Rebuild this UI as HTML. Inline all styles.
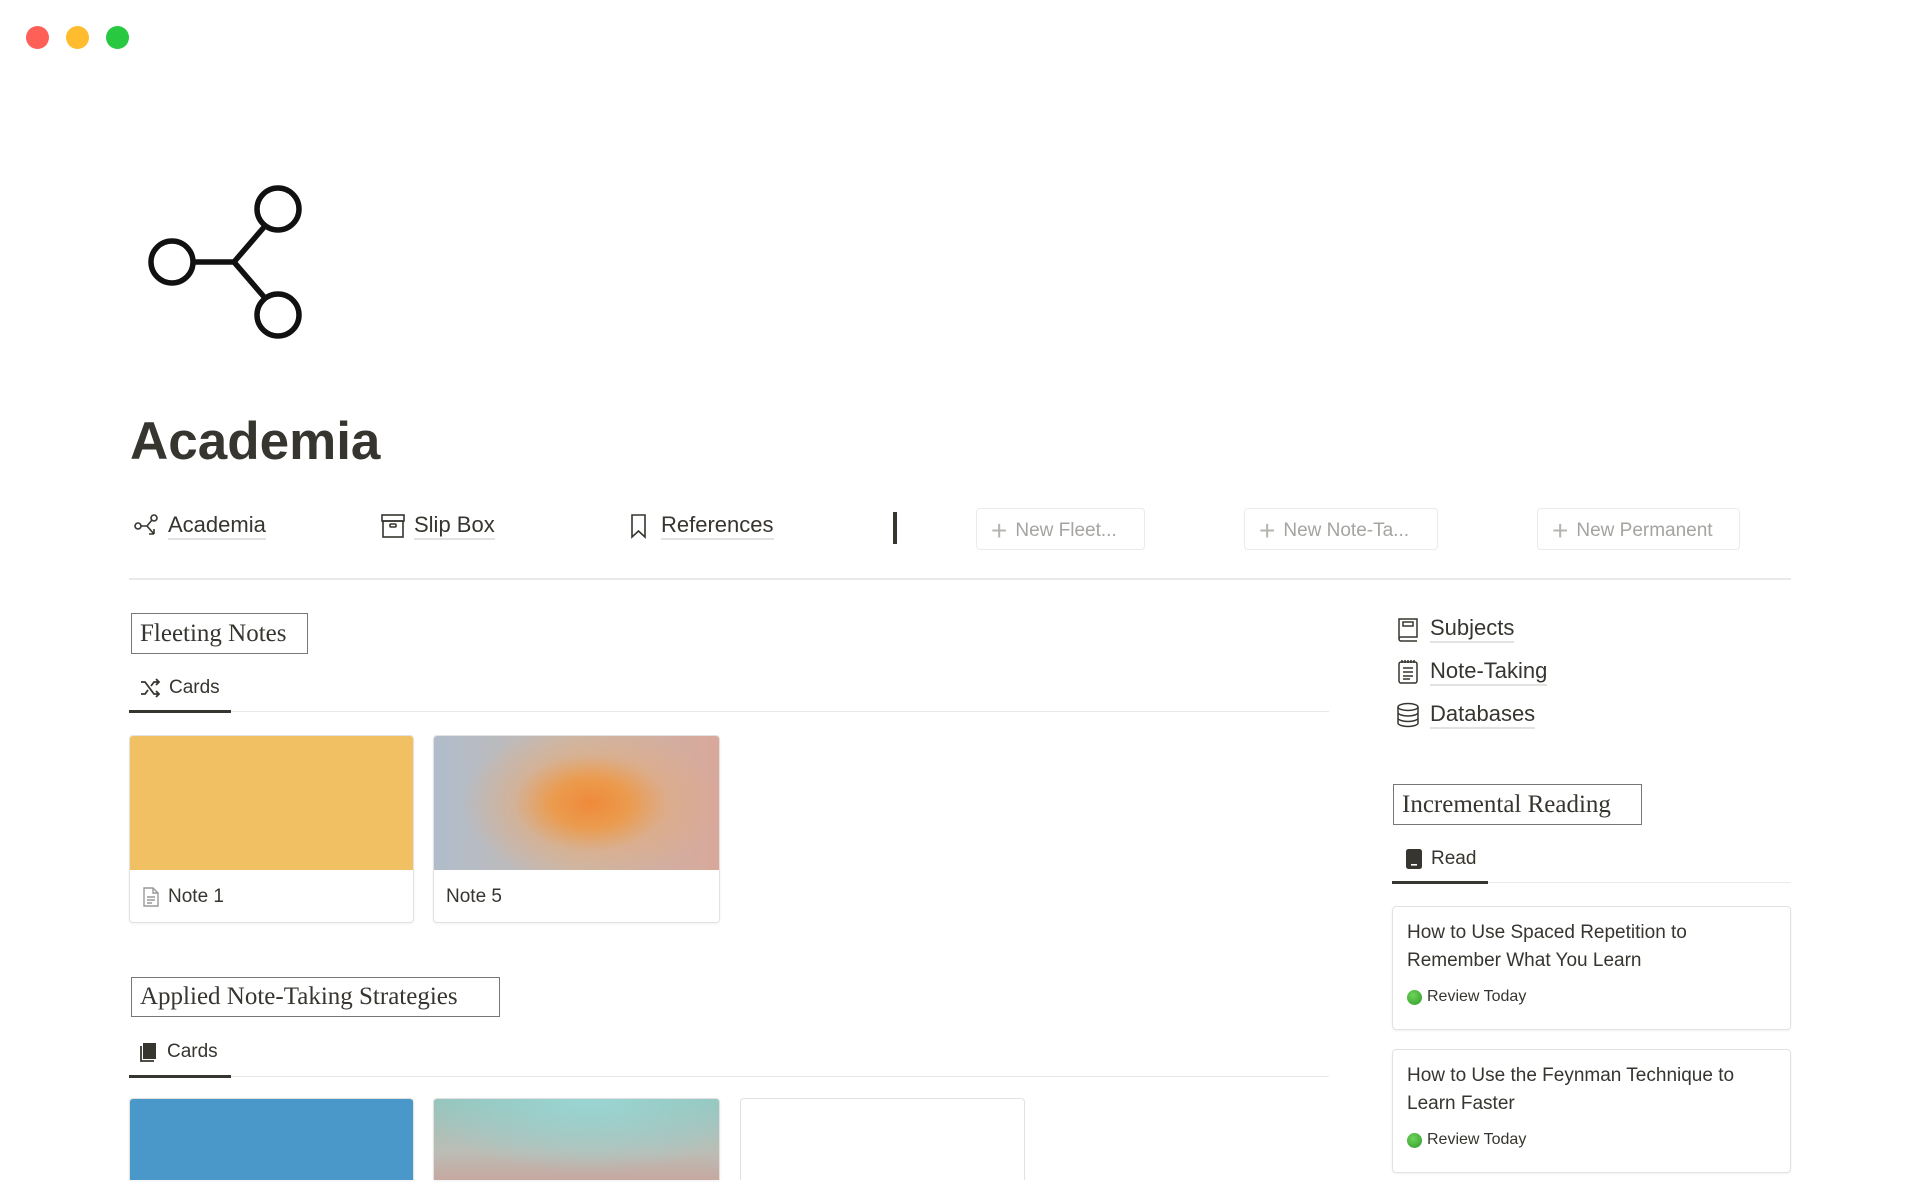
<!DOCTYPE html>
<html><head><meta charset="utf-8"><style>
*{box-sizing:border-box;margin:0;padding:0}
html,body{width:1920px;height:1200px;overflow:hidden}
body{background:#fff;position:relative;font-family:"Liberation Sans",sans-serif;color:#37352f}
.a{position:absolute}
.dot{position:absolute;width:23px;height:23px;border-radius:50%;top:26px}
.nav{position:absolute;top:512px;font-size:22px;display:flex;align-items:center;gap:8px}
.nav span{border-bottom:2px solid #e3e2e0;line-height:26px}
.btn{position:absolute;top:508px;height:42px;border:1px solid #ebebea;border-radius:4px;color:#a5a4a0;font-size:19px;display:flex;align-items:center;padding-left:14px;padding-top:3px;gap:8px}
.btn b{font-weight:300;font-size:28px;color:#b5b4b0}
.sbox{position:absolute;border:1.5px solid #777;font-family:"Liberation Serif",serif;font-size:25px;padding:0 8px;display:flex;align-items:center}
.tab{position:absolute;font-size:19px;display:flex;align-items:center;gap:8px;font-weight:500}
.card{position:absolute;border:1px solid #e3e2e0;border-radius:4px;overflow:hidden;box-shadow:0 1px 2px rgba(0,0,0,.06)}
.card .t{position:absolute;left:12px;bottom:14px;font-size:19px;display:flex;align-items:center;gap:8px}
.lnk{position:absolute;left:1396px;font-size:22px;display:flex;align-items:center;gap:10px}
.lnk span{border-bottom:2px solid #e3e2e0;line-height:26px}
.rc{position:absolute;left:1392px;width:399px;border:1px solid #e3e2e0;border-radius:4px;box-shadow:0 1px 2px rgba(0,0,0,.06);padding:12px 34px 14px 14px;font-size:19px;line-height:28px}
.rc .r{font-size:16px;display:flex;align-items:center;gap:5px;margin-top:8px}
.g{width:15px;height:15px;border-radius:50%;background:radial-gradient(circle at 40% 35%,#6fd35a,#2e9b2a)}
</style></head><body>
<div class="dot" style="left:26px;background:#fe5f57"></div>
<div class="dot" style="left:66px;background:#febc2e"></div>
<div class="dot" style="left:106px;background:#28c840"></div>

<svg class="a" style="left:140px;top:180px" width="170" height="170" viewBox="140 180 170 170" fill="none" stroke="#111" stroke-width="5.5">
<circle cx="172" cy="262" r="21"/><circle cx="278" cy="209" r="21"/><circle cx="278" cy="315" r="21"/>
<path d="M193 262H234M265 226L234 262L265 298"/></svg>

<div class="a" style="left:130px;top:411px;font-size:53px;font-weight:700;color:#37352f">Academia</div>

<div class="nav" style="left:134px"><svg width="26" height="24" viewBox="0 0 26 24" fill="none" stroke="#37352f" stroke-width="1.6"><circle cx="4" cy="12" r="3"/><circle cx="20" cy="4" r="3"/><path d="M7 12H13L18 6M13 12L20 20M20 20H15M20 20V15"/></svg><span>Academia</span></div>
<div class="nav" style="left:380px"><svg width="26" height="26" viewBox="0 0 26 26" fill="none" stroke="#37352f" stroke-width="1.6"><rect x="2" y="2" width="22" height="6"/><rect x="3" y="8" width="20" height="16"/><rect x="10" y="11" width="6" height="3" rx="1"/></svg><span>Slip Box</span></div>
<div class="nav" style="left:628px"><svg width="22" height="26" viewBox="0 0 22 26" fill="none" stroke="#37352f" stroke-width="1.6"><path d="M4 2H17V24L10.5 18L4 24Z"/></svg><span style="margin-left:3px">References</span></div>
<div class="a" style="left:893px;top:512px;width:4px;height:32px;background:#37352f"></div>

<div class="btn" style="left:976px;width:169px"><b>+</b>New Fleet...</div>
<div class="btn" style="left:1244px;width:194px"><b>+</b>New Note-Ta...</div>
<div class="btn" style="left:1537px;width:203px"><b>+</b>New Permanent</div>

<div class="a" style="left:129px;top:578px;width:1662px;height:2px;background:#e9e9e7"></div>

<div class="sbox" style="left:131px;top:613px;width:177px;height:41px">Fleeting Notes</div>
<div class="tab" style="left:139px;top:677px"><svg width="22" height="22" viewBox="0 0 22 22" fill="none" stroke="#37352f" stroke-width="1.8"><path d="M2 5H6L15 17H20M2 17H6L9 13M12 9L15 5H20M17 2L20 5L17 8M17 14L20 17L17 20"/></svg>Cards</div>
<div class="a" style="left:129px;top:711px;width:1200px;height:1px;background:#e9e9e7"></div>
<div class="a" style="left:129px;top:710px;width:102px;height:3px;background:#37352f"></div>

<div class="card" style="left:129px;top:735px;width:285px;height:188px"><div style="height:134px;background:#f0c062"></div><div class="t"><svg width="18" height="20" viewBox="0 0 18 20" fill="none" stroke="#999" stroke-width="1.4"><path d="M2 1H11L16 6V19H2Z M11 1V6H16 M5 10H13M5 13H13M5 16H10"/></svg>Note 1</div></div>
<div class="card" style="left:433px;top:735px;width:287px;height:188px"><div style="height:134px;background:radial-gradient(ellipse 45% 60% at 55% 50%,#ef8a3a 0%,#eb9b4e 30%,rgba(230,170,120,.5) 60%,rgba(180,190,210,0) 100%),linear-gradient(90deg,#b0bccb,#c8b9ae 50%,#d8a89a)"></div><div class="t">Note 5</div></div>

<div class="sbox" style="left:131px;top:977px;width:369px;height:40px">Applied Note-Taking Strategies</div>
<div class="tab" style="left:139px;top:1041px"><svg width="20" height="22" viewBox="0 0 20 22"><path d="M4 2H17V18H4Z" fill="#37352f"/><path d="M2 5V20H15" fill="none" stroke="#37352f" stroke-width="1.8"/></svg>Cards</div>
<div class="a" style="left:129px;top:1076px;width:1200px;height:1px;background:#e9e9e7"></div>
<div class="a" style="left:129px;top:1075px;width:102px;height:3px;background:#37352f"></div>

<div class="card" style="left:129px;top:1098px;width:285px;height:82px;border-bottom:none;border-radius:4px 4px 0 0;background:#4a97c9"></div>
<div class="card" style="left:433px;top:1098px;width:287px;height:82px;border-bottom:none;border-radius:4px 4px 0 0;background:radial-gradient(ellipse 60% 90% at 55% 0%,#9ad5d3,rgba(154,213,211,0) 100%),linear-gradient(180deg,#94c4bc,#bbbdb6 65%,#c6a8a0)"></div>
<div class="card" style="left:740px;top:1098px;width:285px;height:82px;border-bottom:none;border-radius:4px 4px 0 0;box-shadow:none"></div>

<div class="lnk" style="top:615px"><svg width="24" height="26" viewBox="0 0 24 26" fill="none" stroke="#37352f" stroke-width="1.5"><path d="M3 23V3H21V21H5A2 2 0 0 0 5 25H21"/><rect x="7" y="6" width="10" height="4"/></svg><span>Subjects</span></div>
<div class="lnk" style="top:658px"><svg width="24" height="26" viewBox="0 0 24 26" fill="none" stroke="#37352f" stroke-width="1.5"><rect x="3" y="3" width="18" height="21" rx="2"/><path d="M7 9H17M7 13H17M7 17H17M7 20H14M6 1V4M9 1V4M12 1V4M15 1V4M18 1V4"/></svg><span>Note-Taking</span></div>
<div class="lnk" style="top:701px"><svg width="24" height="26" viewBox="0 0 24 26" fill="none" stroke="#37352f" stroke-width="1.5"><ellipse cx="12" cy="5" rx="10" ry="3.5"/><path d="M2 5V21C2 23 7 24.5 12 24.5S22 23 22 21V5M2 10.5C2 12.5 7 14 12 14S22 12.5 22 10.5M2 16C2 18 7 19.5 12 19.5S22 18 22 16"/></svg><span>Databases</span></div>

<div class="sbox" style="left:1393px;top:784px;width:249px;height:41px">Incremental Reading</div>
<div class="tab" style="left:1405px;top:848px"><svg width="18" height="22" viewBox="0 0 18 22"><rect x="1" y="1" width="16" height="20" rx="2.5" fill="#37352f"/><rect x="6" y="16" width="6" height="1.6" fill="#fff"/></svg>Read</div>
<div class="a" style="left:1392px;top:882px;width:399px;height:1px;background:#e9e9e7"></div>
<div class="a" style="left:1392px;top:881px;width:96px;height:3px;background:#37352f"></div>

<div class="rc" style="top:906px;height:124px">How to Use Spaced Repetition to Remember What You Learn<div class="r"><div class="g"></div>Review Today</div></div>
<div class="rc" style="top:1049px;height:124px">How to Use the Feynman Technique to Learn Faster<div class="r"><div class="g"></div>Review Today</div></div>
</body></html>
